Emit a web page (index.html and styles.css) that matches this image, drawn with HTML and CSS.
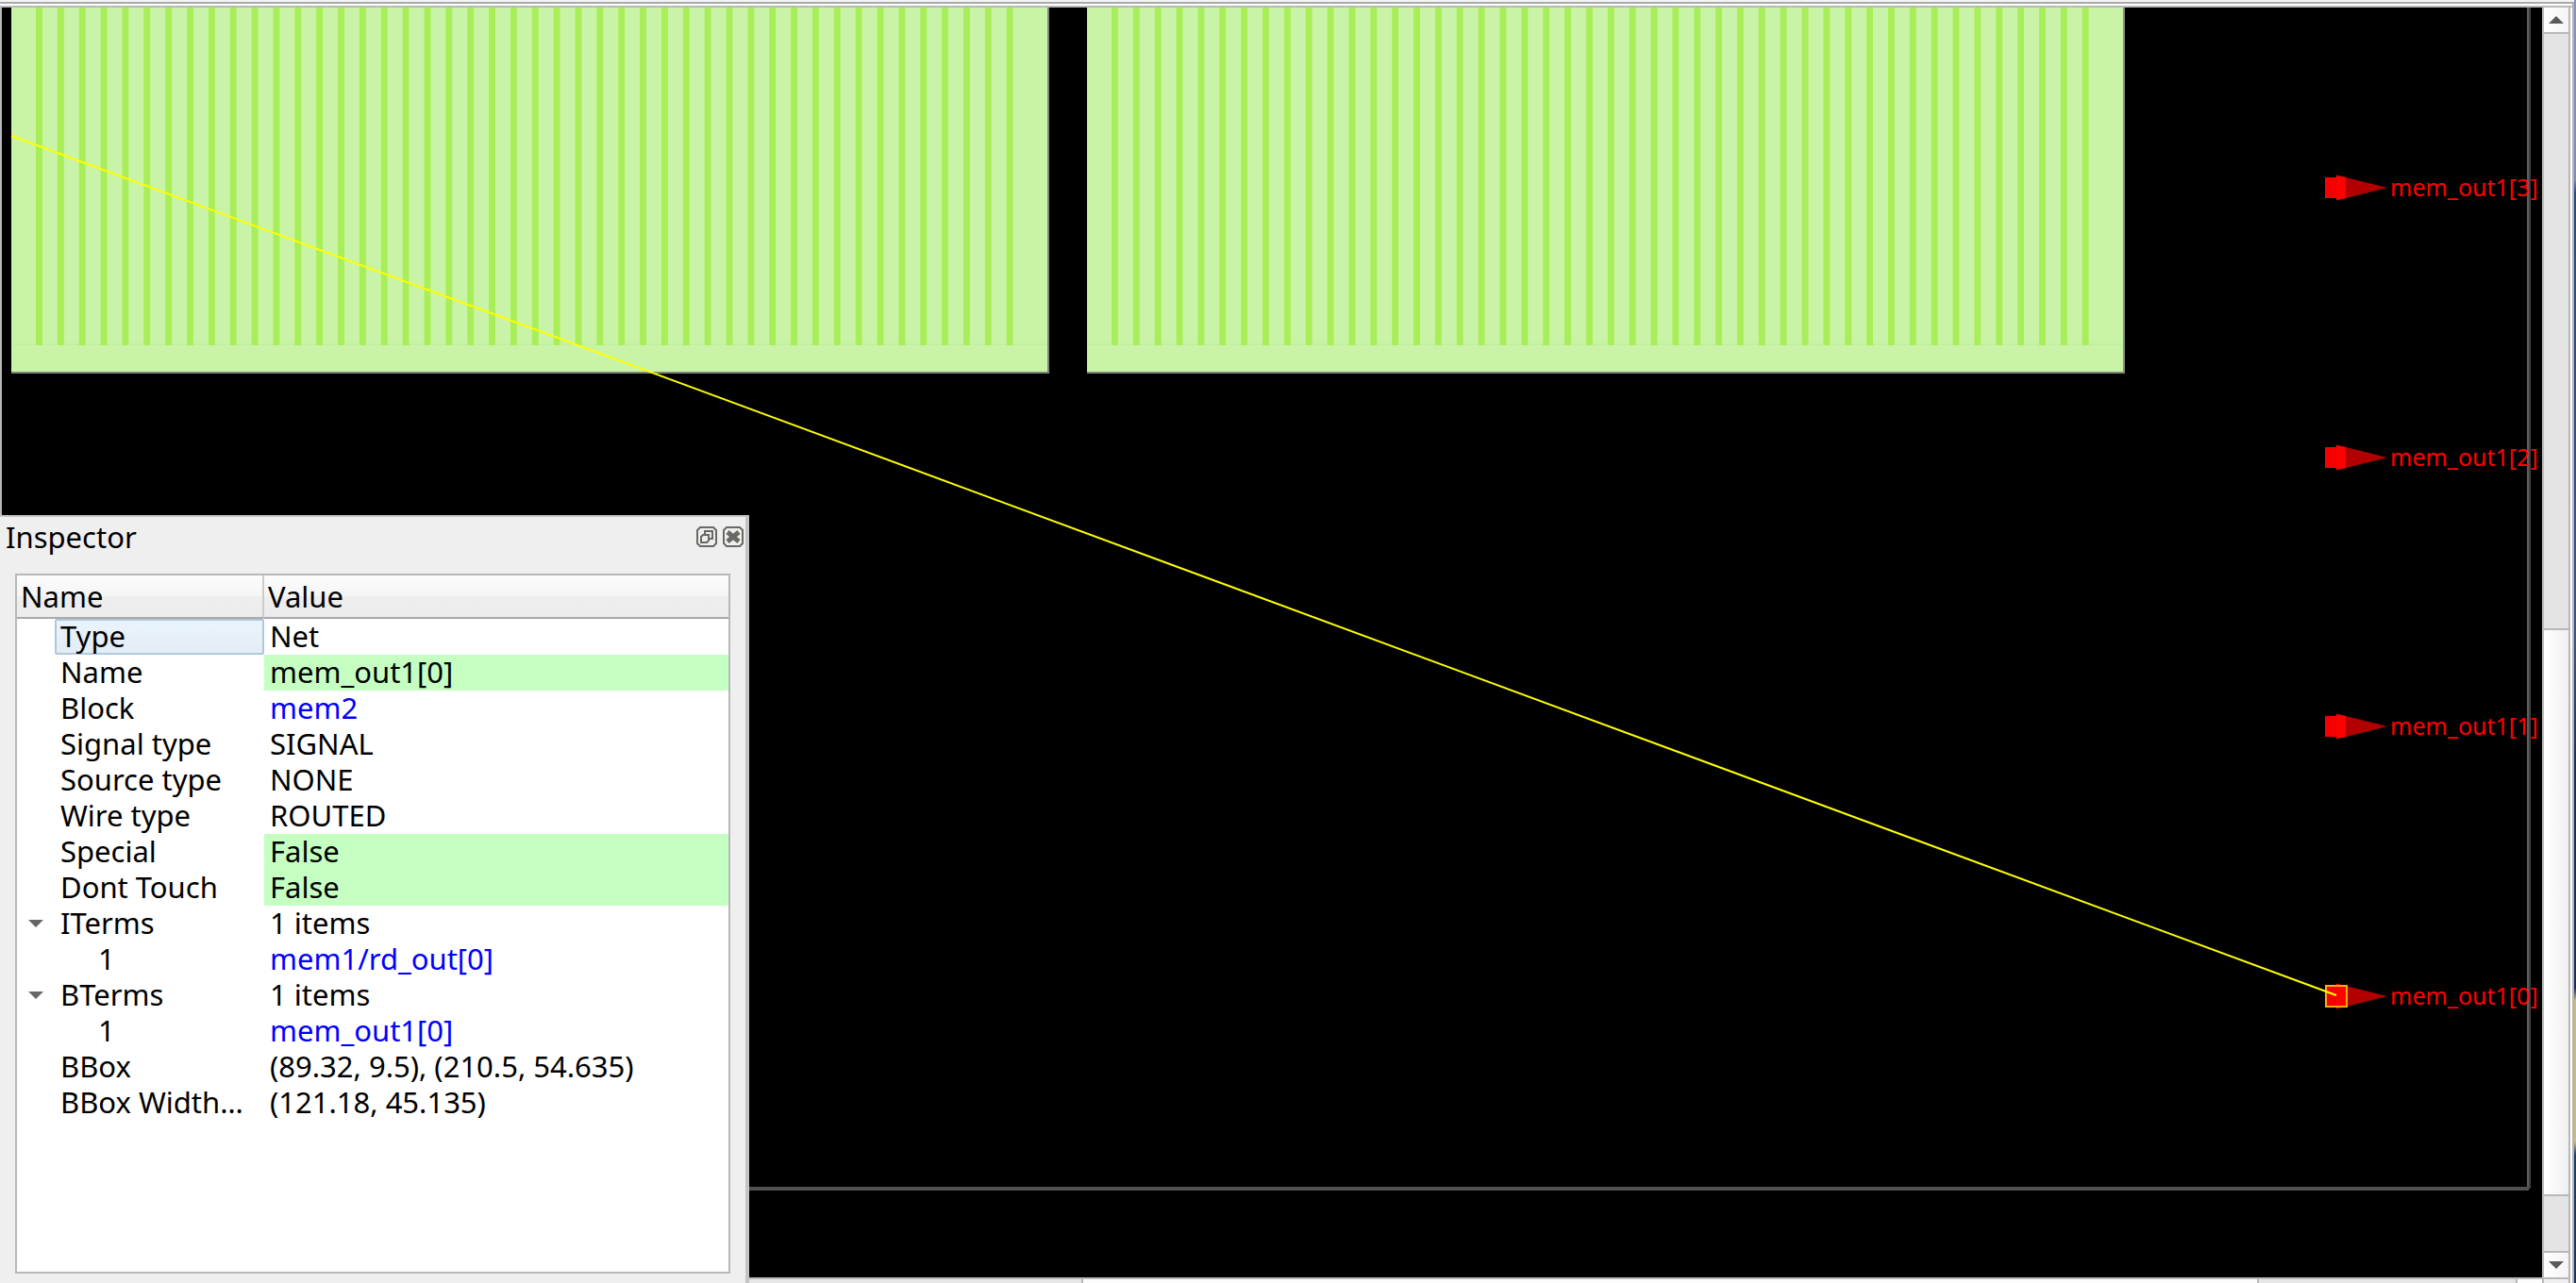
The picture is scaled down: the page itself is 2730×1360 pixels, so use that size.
FILE: index.html
```html
<!DOCTYPE html>
<html lang="en">
<head>
<meta charset="utf-8">
<title>Layout viewer</title>
<link rel="stylesheet" href="styles.css">
</head>
<body>
<div class="window">
  <main class="viewer">
    <svg class="layout" viewBox="2 8 2692 1346" preserveAspectRatio="xMinYMin meet" role="img" aria-label="Chip layout">
      <defs>
        <pattern id="straps" x="38" y="0" width="22.86" height="40" patternUnits="userSpaceOnUse">
          <rect width="6.9" height="40" fill="#a8ee58"/>
        </pattern>
        <g id="macro">
          <path d="M12 8H1112V396H12Z" fill="#7d857a"/>
          <path d="M12 8H1110V394H12Z" fill="#c9f4a8"/>
          <path d="M12 364H1110V366H12Z" fill="#c3efa2"/>
          <path d="M38 8H1074V366H38Z" fill="url(#straps)"/>
        </g>
        <g id="pin">
          <path d="M0 -13.500L54 0L0 13.500Z" fill="#b20000"/>
          <path d="M-12 -11H10V11H-12Z" fill="#f40000"/>
          <path d="M0 -13L10 -11V11L0 13Z" fill="#ff0000"/>
        </g>
      </defs>
      <use href="#macro"/>
      <use href="#macro" x="1140"/>
      <path d="M2678 8H2680V1260H2678Z" fill="#5c5c5c"/>
      <path d="M2680 8H2682V1260H2680Z" fill="#424242"/>
      <path d="M2 1258H2680V1262H2Z" fill="#505050"/>
      <use href="#pin" x="2476" y="199"/>
      <use href="#pin" x="2476" y="485"/>
      <use href="#pin" x="2476" y="770"/>
      <use href="#pin" x="2476" y="1056"/>
      <g class="pin-label">
        <text x="2533" y="208">mem_out1[3]</text>
        <text x="2533" y="494">mem_out1[2]</text>
        <text x="2533" y="779">mem_out1[1]</text>
        <text x="2533" y="1065">mem_out1[0]</text>
      </g>
      <path d="M2465 1045H2487V1067H2465Z" fill="none" stroke="#ffae00" stroke-width="2"/>
      <path d="M12 144L2476 1055" stroke="#ffff00" stroke-width="2"/>
    </svg>
    <aside class="inspector" aria-label="Inspector">
      <header class="dock-title">
        <h1>Inspector</h1>
        <button class="dock-button" aria-label="Float"><svg viewBox="0 0 22 22"><path d="M4 1H18L21 4V18L18 21H4L1 18V4Z M9 8V5H17V13H14 M5 11L7 9H13V15L11 17H5Z"/></svg></button>
        <button class="dock-button" aria-label="Close"><svg viewBox="0 0 22 22"><path d="M4 1H18L21 4V18L18 21H4L1 18V4Z"/><path class="cross" d="M5 6L17 16M17 6L5 16"/></svg></button>
      </header>
      <div class="tree">
        <table>
          <thead><tr><th scope="col">Name</th><th scope="col">Value</th></tr></thead>
          <tbody>
            <tr><td><span class="key current">Type</span></td><td>Net</td></tr>
            <tr><td><span class="key">Name</span></td><td class="editable">mem_out1[0]</td></tr>
            <tr><td><span class="key">Block</span></td><td><a href="#mem2">mem2</a></td></tr>
            <tr><td><span class="key">Signal type</span></td><td>SIGNAL</td></tr>
            <tr><td><span class="key">Source type</span></td><td>NONE</td></tr>
            <tr><td><span class="key">Wire type</span></td><td>ROUTED</td></tr>
            <tr><td><span class="key">Special</span></td><td class="editable">False</td></tr>
            <tr><td><span class="key">Dont Touch</span></td><td class="editable">False</td></tr>
            <tr><td class="branch"><button class="toggle" aria-label="Collapse ITerms"></button><span class="key">ITerms</span></td><td>1 items</td></tr>
            <tr><td><span class="key child">1</span></td><td><a href="#rd-out">mem1/rd_out[0]</a></td></tr>
            <tr><td class="branch"><button class="toggle" aria-label="Collapse BTerms"></button><span class="key">BTerms</span></td><td>1 items</td></tr>
            <tr><td><span class="key child">1</span></td><td><a href="#mem-out">mem_out1[0]</a></td></tr>
            <tr><td><span class="key">BBox</span></td><td>(89.32, 9.5), (210.5, 54.635)</td></tr>
            <tr><td><span class="key">BBox Width…</span></td><td>(121.18, 45.135)</td></tr>
          </tbody>
        </table>
      </div>
    </aside>
  </main>
  <div class="vscroll">
    <button class="step" aria-label="Scroll up"><svg viewBox="0 0 16 8"><path d="M0 8L8 0L16 8Z"/></svg></button>
    <div class="before"></div>
    <div class="thumb"></div>
    <div class="after"></div>
    <button class="step" aria-label="Scroll down"><svg viewBox="0 0 16 8"><path d="M0 0L8 8L16 0Z"/></svg></button>
  </div>
  <div class="hscroll">
    <div class="before"></div>
    <div class="thumb"></div>
    <div class="after"></div>
    <div class="step"></div>
  </div>
  <div class="corner"></div>
</div>
<div class="desktop"></div>
</body>
</html>
```
FILE: styles.css
```css
* { box-sizing: border-box; }

body {
  margin: 0;
  height: 100vh;
  display: flex;
  overflow: hidden;
  background: #f4f4f4;
  color: #000;
  font-family: "Noto Sans", "Open Sans", sans-serif;
  font-size: 31px;
}

button {
  margin: 0;
  padding: 0;
  border: 0;
  background: none;
}

.window {
  flex: 1;
  min-width: 0;
  display: grid;
  grid-template-columns: minmax(0, 1fr) 32px;
  grid-template-rows: minmax(0, 1fr) 6px;
  margin-top: 2px;
  padding-top: 4px;
  border-top: 2px solid #aaa;
  border-right: 2px solid #b4b4b4;
  background: linear-gradient(#fff 2px, #b8b8b8 2px, #b8b8b8 4px, #fff 4px);
}

.viewer {
  position: relative;
  border-left: 2px solid #b8b8b8;
  background: #000;
}

.layout {
  display: block;
  width: 100%;
  height: 100%;
}

.pin-label {
  fill: #f00;
  font-size: 25px;
}

.inspector {
  position: absolute;
  left: -2px;
  bottom: -6px;
  width: 794px;
  height: calc(100vh - 546px);
  display: flex;
  flex-direction: column;
  padding: 0 16px 10px;
  border-top: 2px solid #c8c8c8;
  border-right: 4px solid #c4c4c4;
  background: #efefef;
}

.dock-title {
  display: flex;
  align-items: center;
  gap: 6px;
  height: 42px;
  margin: 0 -14px 18px -10px;
}

.dock-title h1 {
  flex: 1;
  margin: 0;
  font-size: 31px;
  font-weight: 400;
  line-height: 40px;
}

.dock-button {
  width: 22px;
  height: 22px;
}

.dock-button svg {
  display: block;
  fill: none;
  stroke: #6a6964;
  stroke-width: 2;
}

.dock-button .cross { stroke-width: 5; }

.tree {
  flex: 1;
  overflow: hidden;
  border: 2px solid #b8b8b8;
  background: #fff;
}

table {
  width: 100%;
  table-layout: fixed;
  border-collapse: separate;
  border-spacing: 0;
}

th {
  height: 46px;
  padding: 0 4px;
  border-bottom: 2px solid #aaa;
  background: linear-gradient(#fcfcfc, #f5f5f5 50%, #eee 51%, #ececec);
  font-weight: 400;
  line-height: 40px;
  text-align: left;
}

th:first-child {
  width: 262px;
  border-right: 2px solid #ccc;
}

td {
  height: 38px;
  padding: 0 0 2px 6px;
  line-height: 36px;
  white-space: nowrap;
}

td:first-child {
  padding-bottom: 0;
  padding-left: 40px;
}

td.branch:first-child { padding-left: 12px; }

.key {
  display: block;
  height: 38px;
  padding-left: 6px;
}

.key.child { padding-left: 46px; }

.key.current {
  padding-left: 4px;
  border: 2px solid #b0c8dc;
  border-radius: 2px;
  background: linear-gradient(#e8f4fd, #e4ecf4);
  line-height: 32px;
}

.branch {
  display: flex;
  align-items: center;
  gap: 12px;
}

.toggle {
  width: 16px;
  height: 8px;
  background: #666;
  clip-path: polygon(0 0, 100% 0, 50% 100%);
}

.editable { background: #c5ffc2; }

a {
  color: #00f;
  text-decoration: none;
}

.vscroll {
  display: flex;
  flex-direction: column;
  border: solid #b8b8b8;
  border-width: 0 2px;
  margin-right: 2px;
}

.vscroll .step {
  display: grid;
  place-items: center;
  height: 26px;
  background: linear-gradient(90deg, #fff, #f4f4f4);
}

.vscroll .step svg {
  width: 16px;
  height: 8px;
  fill: #5a5a5a;
}

.vscroll .before,
.vscroll .after {
  background: #e4e4e4;
}

.vscroll .before {
  flex: 630;
  border-top: 2px solid #b8b8b8;
}

.vscroll .thumb {
  flex: 598;
  border: solid #b8b8b8;
  border-width: 2px 0;
  background: linear-gradient(90deg, #fff, #f0f0f0);
}

.vscroll .after {
  flex: 58;
  border-bottom: 2px solid #b8b8b8;
}

.hscroll {
  display: flex;
  border-top: 2px solid #b8b8b8;
}

.hscroll .before,
.hscroll .after {
  background: #e6e6e6;
}

.hscroll .before { flex: 1146; }

.hscroll .thumb {
  flex: 1244;
  border: solid #b8b8b8;
  border-width: 0 2px;
  background: #fcfcfc;
}

.hscroll .after {
  flex: 272;
  border-right: 2px solid #b8b8b8;
}

.hscroll .step {
  width: 26px;
  background: #fcfcfc;
}

.corner {
  margin-right: 2px;
  border: solid #b8b8b8;
  border-width: 2px 2px 0;
  background: #efefef;
}

/* Sliver of wallpaper beside the window */
.desktop {
  width: 2px;
  background: linear-gradient(#8890c8 0, #8088bc 14%, #28488c 15%, #3c5088 50%, #182c64 60%, #182c64 77%, #c8bc80 78%, #c8bc80 89%, #1c3c70 90%, #183464 100%);
}
```
